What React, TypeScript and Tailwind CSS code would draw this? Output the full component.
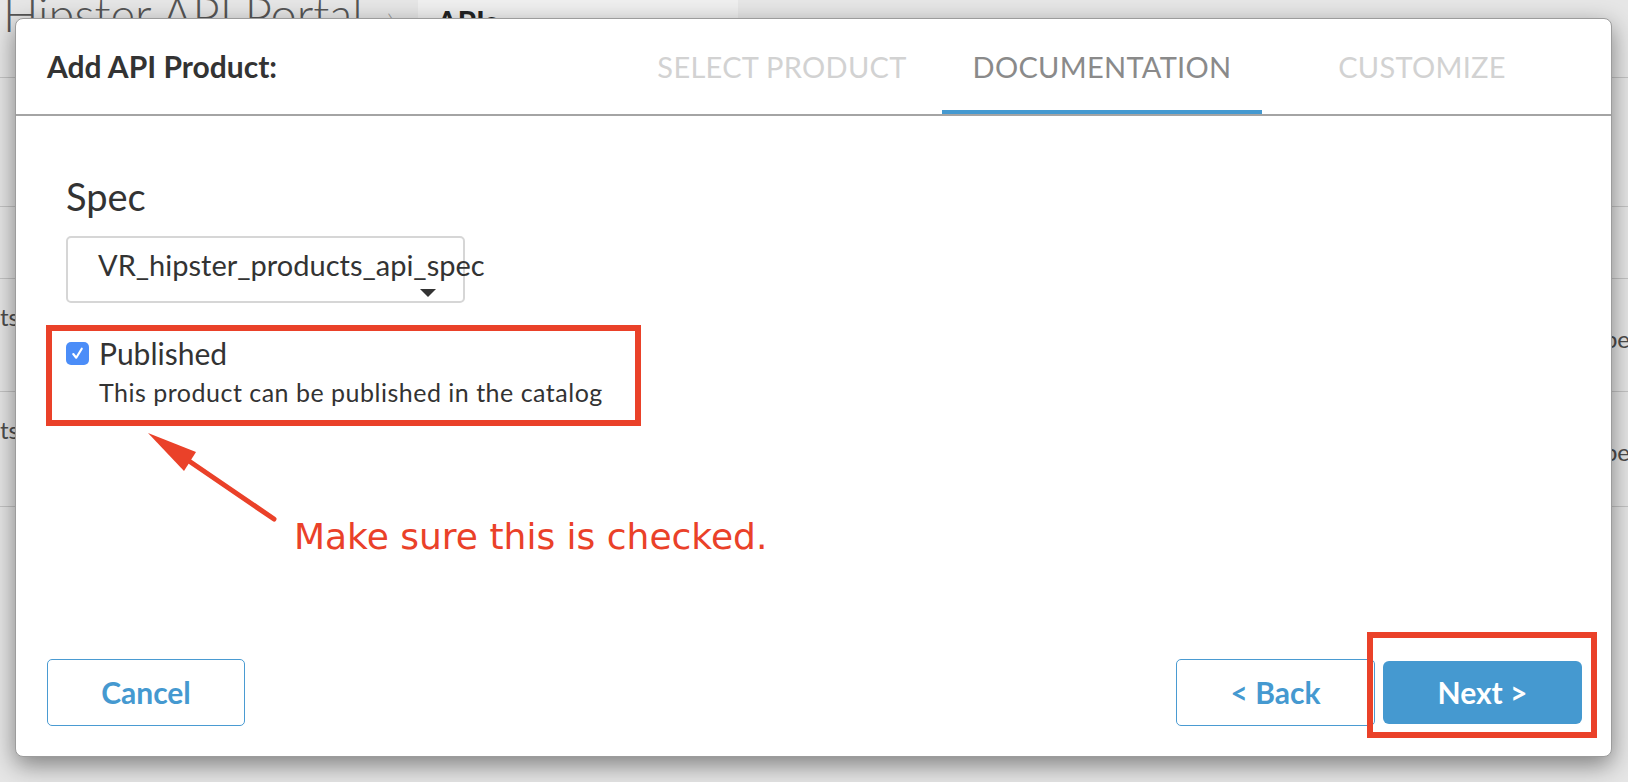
import React from 'react';

const tabs = [
  { label: 'SELECT PRODUCT', active: false },
  { label: 'DOCUMENTATION', active: true },
  { label: 'CUSTOMIZE', active: false },
];

const CheckBox: React.FC = () => (
  <span className="flex h-[23px] w-[23px] shrink-0 items-center justify-center rounded-[5px] bg-[#4b8df8]">
    <svg width="17" height="17" viewBox="0 0 16 16" fill="none">
      <path d="M4 8.5 L6.8 12 L12 3.5" stroke="white" strokeWidth="2" strokeLinecap="round" strokeLinejoin="round" />
    </svg>
  </span>
);

const Background: React.FC = () => (
  <div className="flex flex-col text-[#4d4d4d]">
    <div className="flex h-[78px] items-start border-b border-[#c4c4c4]">
      <div className="-mt-[9px] pl-[3px] text-[47px] font-light leading-none text-[#555]">Hipster API Portal</div>
      <div className="ml-[24px] mt-[2px] text-[26px] font-light leading-none text-[#999]">›</div>
      <div className="ml-[24px] flex h-[40px] w-[320px] items-start justify-between bg-[#efefef] pl-[19px] pr-[28px]">
        <span className="mt-[6px] text-[30px] font-bold leading-none text-[#222]">APIs</span>
        <span className="mt-[16px] text-[12px] leading-none text-[#555]">▼</span>
      </div>
    </div>
    <div className="h-[129px] border-b border-[#c4c4c4]" />
    <div className="h-[72px] border-b border-[#c4c4c4]" />
    <div className="flex h-[113px] justify-between border-b border-[#c4c4c4] pt-[20px] text-[24px]">
      <span>ts</span>
      <span className="-mr-[2px] mt-[22px]">pe</span>
    </div>
    <div className="flex h-[115px] justify-between border-b border-[#c4c4c4] pt-[20px] text-[24px]">
      <span>ts</span>
      <span className="-mr-[2px] mt-[22px]">pe</span>
    </div>
  </div>
);

const Dialog: React.FC = () => (
  <div className="absolute left-[15px] top-[18px] flex h-[739px] w-[1597px] flex-col rounded-[8px] border border-[#9c9c9c] bg-white shadow-[0_8px_24px_rgba(0,0,0,0.45)]">
    <div className="flex h-[97px] items-stretch border-b-2 border-[#a4a4a4] pl-[31px] pr-[29px]">
      <div className="flex flex-1 items-center text-[30px] font-bold text-[#333]">Add API Product:</div>
      <div className="flex">
        {tabs.map((tab) => (
          <div
            key={tab.label}
            className={`relative flex w-[320px] items-center justify-center text-[29px] tracking-[0.01em] ${
              tab.active ? 'text-[#8a8a8a]' : 'text-[#d2d2d2]'
            }`}
          >
            {tab.label}
            {tab.active && <span className="absolute bottom-0 left-0 right-0 h-[4px] bg-[#4599d0]" />}
          </div>
        ))}
      </div>
    </div>

    <div className="flex flex-1 flex-col pl-[50px] pt-[58px] text-[#333]">
      <div className="text-[38px] leading-[44px]">Spec</div>
      <div className="relative mt-[18px] h-[67px] w-[399px] rounded-[5px] border-2 border-[#d6d6d6] pl-[30px] pt-[12px]">
        <span className="whitespace-nowrap text-[29px] leading-[30px]">VR_hipster_products_api_spec</span>
        <span className="absolute bottom-[4px] right-[27px] h-0 w-0 border-l-[8px] border-r-[8px] border-t-[8px] border-l-transparent border-r-transparent border-t-[#333]" />
      </div>
      <div className="mt-[34px] flex items-center gap-[10px]">
        <CheckBox />
        <span className="text-[30px] leading-[32px]">Published</span>
      </div>
      <div className="mt-[8px] pl-[33px] text-[25px] leading-[30px] tracking-[0.02em]">This product can be published in the catalog</div>
    </div>

    <div className="flex items-center justify-between pb-[30px] pl-[31px] pr-[29px]">
      <button className="h-[67px] w-[198px] rounded-[5px] border-[1.5px] border-[#4a9bd2] text-[30px] font-bold text-[#4599d0]">
        Cancel
      </button>
      <div className="flex items-center gap-[8px]">
        <button className="h-[67px] w-[199px] rounded-[5px] border-[1.5px] border-[#4a9bd2] text-[30px] font-bold text-[#4599d0]">
          &lt; Back
        </button>
        <button className="h-[63px] w-[199px] rounded-[6px] bg-[#4599d0] text-[30px] font-bold text-white">
          Next &gt;
        </button>
      </div>
    </div>
  </div>
);

const Annotations: React.FC = () => (
  <>
    <div className="absolute left-[46px] top-[325px] h-[101px] w-[595px] border-[6px] border-[#ea4129]" />
    <div className="absolute left-[1367px] top-[632px] h-[106px] w-[230px] border-[6px] border-[#ea4129]" />
    <svg className="absolute left-0 top-0" width="400" height="600" viewBox="0 0 400 600">
      <line x1="189" y1="461" x2="274" y2="519" stroke="#ea4129" strokeWidth="5" strokeLinecap="round" />
      <polygon points="148,433 196,452 184,471" fill="#ea4129" />
    </svg>
    <div
      className="absolute left-[294px] top-[515px] whitespace-nowrap text-[36px] leading-[44px] text-[#ea4129]"
      style={{ fontFamily: '"DejaVu Sans", sans-serif' }}
    >
      Make sure this is checked.
    </div>
  </>
);

export default function App() {
  return (
    <div className="relative h-[782px] w-[1628px] overflow-hidden bg-[#e6e6e6]" style={{ fontFamily: 'Lato, "Open Sans", sans-serif' }}>
      <Background />
      <Dialog />
      <Annotations />
    </div>
  );
}
